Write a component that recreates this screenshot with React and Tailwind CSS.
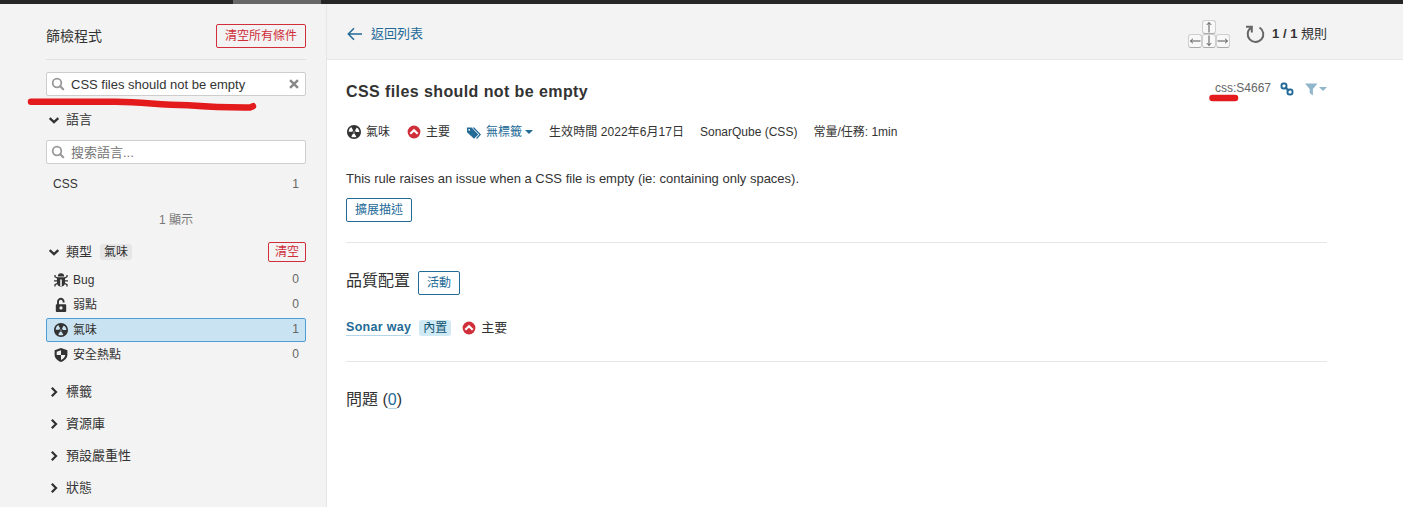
import React from "react";

const Svg = ({ className = "", children, size = 16 }) => (
  <svg viewBox="0 0 16 16" width={size} height={size} fill="currentColor" className={`block shrink-0 ${className}`}>
    {children}
  </svg>
);

const BugIcon = () => (
  <Svg>
    <path d="M4.800 4.600a3.200 3.400 0 0 1 6.400 0z" />
    <path fillRule="evenodd" d="M4 5.300h8v5.500a4 3.700 0 0 1-8 0zM7.200 7.500V14h1.600V7.500z" />
    <path d="M2 3v1.700l2.500 1.600M14 3v1.700l-2.500 1.600M1 8.800h3M12 8.800h3M2 14.500v-1.800l2.600-1.400M14 14.500v-1.800l-2.600-1.400" fill="none" stroke="currentColor" strokeWidth="1.300" />
  </Svg>
);
const LockIcon = () => (
  <Svg>
    <path d="M5 8V4.800a2.800 2.800 0 0 1 5.600-.4v1" fill="none" stroke="currentColor" strokeWidth="1.900" />
    <path fillRule="evenodd" d="M3.800 7.300h8.400a1 1 0 0 1 1 1V14a1 1 0 0 1-1 1H3.800a1 1 0 0 1-1-1V8.300a1 1 0 0 1 1-1zM8 9.300a1.600 1.600 0 1 0 0 3.200 1.600 1.600 0 0 0 0-3.200z" />
  </Svg>
);
const SmellIcon = () => (
  <Svg>
    <path d="M8 2C4.700 2 2 4.700 2 8s2.700 6 6 6 6-2.700 6-6-2.700-6-6-6zm-.5 5.500h.9v.9h-.9v-.9zm-3.800.2c-.1 0-.2-.1-.2-.2 0-.4.1-1.200.6-2S5.300 4.200 5.600 4c.2 0 .3 0 .3.1l1.300 2.300c0 .1 0 .2-.1.2-.1.2-.2.3-.3.5-.1.2-.2.4-.2.5 0 .1-.1.2-.2.2l-2.700-.1zM9.900 12c-.3.2-1.100.5-2 .5-.9 0-1.700-.3-2-.5-.1 0-.1-.2-.1-.3l1.300-2.300c0-.1.1-.1.2-.1.2.1.3.1.5.1s.4 0 .5-.1c.1 0 .2 0 .2.1l1.300 2.300c.2.2.2.3.1.3zm2.500-4.100L9.700 8c-.1 0-.2-.1-.2-.2 0-.2-.1-.4-.2-.5 0-.1-.2-.3-.3-.4-.1 0-.1-.1-.1-.2l1.300-2.300c.1-.1.2-.1.3-.1.3.2 1 .7 1.500 1.500s.6 1.600.6 2c0 0-.1.1-.2.1z" transform="translate(-1.300 -1.300) scale(1.163)" />
  </Svg>
);
const ShieldIcon = () => (
  <Svg>
    <path fillRule="evenodd" d="M8 1 1.600 3.200v4.300c0 3.400 2.500 6 6.400 7.500 3.900-1.500 6.400-4.100 6.400-7.500V3.200L8 1zM8 3.300V8h4.300c-.3 2.300-1.900 3.900-4.300 5V8H3.700V4.700L8 3.300z" />
  </Svg>
);
const MajorIcon = () => (
  <Svg>
    <circle cx="8" cy="8" r="6.400" fill="#d02f3a" />
    <path d="M4.300 9.700 8 6.200l3.700 3.500" fill="none" stroke="#fff" strokeWidth="2.200" />
  </Svg>
);
const SearchIcon = () => (
  <Svg className="text-[#999]">
    <circle cx="7" cy="7" r="4.300" fill="none" stroke="currentColor" strokeWidth="1.800" />
    <path d="m10.300 10.300 2.900 2.900" stroke="currentColor" strokeWidth="2.200" strokeLinecap="round" />
  </Svg>
);
const ChevronDown = () => (
  <Svg>
    <path d="M3.700 6.200 8 10.200l4.300-4" fill="none" stroke="currentColor" strokeWidth="2.300" />
  </Svg>
);
const ChevronRight = () => (
  <Svg>
    <path d="M5.800 3.700 10 8l-4.200 4.300" fill="none" stroke="currentColor" strokeWidth="2.300" />
  </Svg>
);
const Caret = ({ className }) => (
  <svg viewBox="0 0 8 4" width="8" height="4" fill="currentColor" className={`block shrink-0 ${className}`}>
    <path d="M0 0h8L4 4z" />
  </svg>
);

const Key = ({ children }) => (
  <span className="flex h-[14px] w-[14px] items-center justify-center rounded-[3px] border border-[#cfcfcf] border-b-[#aaa] bg-[#f8f8f8] text-[#555]">
    {children}
  </span>
);
const Arrow = ({ rotate }) => (
  <svg viewBox="0 0 12 12" width="12" height="12" className="block shrink-0" fill="none" stroke="currentColor" strokeWidth="1">
    <g transform={`rotate(${rotate} 6 6)`}>
      <path d="M6 11.500V1.500M3.800 3.900 6 1.500l2.200 2.400" />
    </g>
  </svg>
);

const TypeRow = ({ icon, label, count, active }) => (
  <div
    className={`flex h-6 items-center rounded-[2px] border pr-[6px] pl-[6px] ${
      active ? "border-[#4b9fd5] bg-[#cae3f2]" : "border-transparent"
    }`}
  >
    {icon}
    <span className="ml-1 text-[12px]">{label}</span>
    <span className="mb-[2px] ml-auto text-[12px] text-[#656565]">{count}</span>
  </div>
);

const Collapsed = ({ label }) => (
  <div className="flex h-8 items-center">
    <ChevronRight />
    <span className="ml-1">{label}</span>
  </div>
);

export default function App() {
  return (
    <div className="flex h-[507px] flex-col overflow-hidden bg-white font-['Liberation_Sans','Noto_Sans_CJK_TC',sans-serif] text-[13px] leading-4 text-[#333]">
      <div className="flex h-1 shrink-0 bg-[#262626]">
        <div className="ml-[233px] h-1 w-[88px] bg-[#676767]" />
      </div>
      <div className="flex min-h-0 flex-1">
        <aside className="relative w-[327px] shrink-0 border-r border-[#e6e6e6] bg-[#f3f3f3] pr-5 pl-[46px]">
          <div className="flex h-[56px] items-center justify-between border-b border-[#e1e1e1] pt-2">
            <span className="text-[14px]">篩檢程式</span>
            <span className="flex h-6 items-center rounded-[2px] border border-[#d02f3a] px-2 text-[12px] text-[#d02f3a]">
              清空所有條件
            </span>
          </div>
          <div className="mt-3 flex h-6 items-center rounded-[2px] border border-[#cdcdcd] bg-white pr-1 pl-[3px]">
            <SearchIcon />
            <span className="mt-px ml-[5px]">CSS files should not be empty</span>
            <Svg className="ml-auto text-[#888]" size={14}>
              <path d="m3.500 3.500 9 9m0-9-9 9" stroke="currentColor" strokeWidth="2.700" />
            </Svg>
          </div>
          <svg viewBox="0 0 240 16" width="240" height="16" className="absolute top-[92px] left-[24px]" fill="none" stroke="#e31b1c" strokeWidth="6.500" strokeLinecap="round" strokeLinejoin="round">
            <path d="M7 5.800h85c28 .4 40 2.600 72 3.400 20 1.500 50 2.300 62 2.200l3-1.200" />
          </svg>
          <div className="mt-4 flex h-4 items-center">
            <ChevronDown />
            <span className="ml-1">語言</span>
          </div>
          <div className="mt-3 flex h-6 items-center rounded-[2px] border border-[#cdcdcd] bg-white pl-[3px]">
            <SearchIcon />
            <span className="mt-px ml-[5px] text-[#737373]">搜索語言...</span>
          </div>
          <div className="mt-2 flex h-6 items-center justify-between px-[7px]">
            <span className="text-[12px]">CSS</span>
            <span className="text-[12px] text-[#656565]">1</span>
          </div>
          <div className="mt-3 flex h-6 items-center justify-center text-[12px] text-[#777]">1 顯示</div>
          <div className="mt-[10px] flex h-5 items-center">
            <ChevronDown />
            <span className="ml-1">類型</span>
            <span className="ml-2 flex h-4 items-center rounded-[3px] bg-[#e6e6e6] px-1 text-[12px]">氣味</span>
            <span className="ml-auto flex h-5 items-center rounded-[2px] border border-[#d02f3a] px-[6px] text-[12px] text-[#d02f3a]">
              清空
            </span>
          </div>
          <div className="mt-[6px] flex flex-col gap-px">
            <TypeRow icon={<BugIcon />} label="Bug" count="0" />
            <TypeRow icon={<LockIcon />} label="弱點" count="0" />
            <TypeRow icon={<SmellIcon />} label="氣味" count="1" active />
            <TypeRow icon={<ShieldIcon />} label="安全熱點" count="0" />
          </div>
          <div className="mt-[9px]">
            <Collapsed label="標籤" />
            <Collapsed label="資源庫" />
            <Collapsed label="預設嚴重性" />
            <Collapsed label="狀態" />
          </div>
        </aside>

        <main className="min-w-0 flex-1">
          <header className="flex h-[56px] items-center border-b border-[#e6e6e6] bg-[#f3f3f3] pr-[76px] pl-5 pt-1">
            <svg viewBox="0 0 16 16" width="16" height="16" className="block text-[#236a97]" fill="none" stroke="currentColor" strokeWidth="1.500">
              <path d="M15 8H1.500M7 2.300 1.300 8 7 13.700" />
            </svg>
            <span className="ml-2 text-[#236a97]">返回列表</span>
            <div className="ml-auto flex flex-col items-center">
              <Key><Arrow rotate={0} /></Key>
              <div className="flex">
                <Key><Arrow rotate={270} /></Key>
                <Key><Arrow rotate={180} /></Key>
                <Key><Arrow rotate={90} /></Key>
              </div>
            </div>
            <svg viewBox="0 0 20 20" width="20" height="20" className="ml-[15px] block text-[#666]" fill="none" stroke="currentColor" strokeWidth="2">
              <path d="M14.500 3.500a7.800 7.800 0 1 1-8.300.2" />
              <path d="M1 2.700h5.800v5.700" />
            </svg>
            <span className="ml-[7px]"><b>1 / 1</b> 規則</span>
          </header>

          <div className="pr-[76px] pl-[19px]">
            <div className="flex h-[62px] items-center justify-between">
              <h1 className="mt-[2px] text-[16px] font-bold tracking-[0.41px]">CSS files should not be empty</h1>
              <div className="relative flex items-center text-[12px] text-[#656565]">
                <span className="mb-[6px]">css:S4667</span>
                <svg viewBox="0 0 32 8" width="32" height="8" className="absolute top-[14px] left-[-8px]" fill="none" stroke="#e31b1c" strokeWidth="6.500" strokeLinecap="round">
                  <path d="M5.500 4h22.500" />
                </svg>
                <svg viewBox="0 0 16 16" width="16" height="16" className="mb-1 ml-2 block text-[#236a97]" fill="none" stroke="currentColor" strokeWidth="1.900">
                  <rect x="2.500" y="2.500" width="5" height="5" rx="2" />
                  <rect x="8.500" y="8.500" width="5" height="5" rx="2" />
                  <path d="m6 6 4 4" />
                </svg>
                <Svg className="mb-1 ml-2 text-[#91b5cb]">
                  <path d="M2 2.500h12.500L9.900 8v6.500L6.700 12V8z" />
                </Svg>
                <Caret className="mb-1 text-[#91b5cb]" />
              </div>
            </div>

            <div className="flex h-5 items-center text-[12px]">
              <SmellIcon />
              <span className="ml-1">氣味</span>
              <span className="ml-4"><MajorIcon /></span>
              <span className="ml-1">主要</span>
              <span className="ml-4 flex items-center text-[#236a97]">
                <Svg className="mt-[2px]">
                  <path d="M6.500 2.500h1.800L15 9.400 11 14l-.9-.9L13.300 9.500z" />
                  <path fillRule="evenodd" d="M1 2.500h4.600l6.700 6.900-4.300 4.400L1 7.300zM3.200 3.900a.9.900 0 1 0 0 1.800.9.900 0 0 0 0-1.800z" />
                </Svg>
                <span className="ml-1">無標籤</span>
                <Caret className="ml-[3px]" />
              </span>
              <span className="ml-4 tracking-[0.06px]">生效時間 2022年6月17日</span>
              <span className="ml-4">SonarQube (CSS)</span>
              <span className="ml-4">常量/任務: 1min</span>
            </div>

            <p className="mt-[29px] h-4 whitespace-nowrap">This rule raises an issue when a CSS file is empty (ie: containing only spaces).</p>
            <div className="mt-[11px] flex">
              <span className="flex h-6 items-center rounded-[2px] border border-[#236a97] px-2 text-[12px] text-[#236a97]">擴展描述</span>
            </div>
            <hr className="mt-5 border-t border-[#e6e6e6]" />

            <div className="mt-7 flex h-6 items-center">
              <h2 className="mb-1 text-[16px]">品質配置</h2>
              <span className="ml-2 flex h-6 items-center rounded-[2px] border border-[#236a97] px-2 text-[12px] text-[#236a97]">活動</span>
            </div>
            <div className="mt-[23px] flex h-5 items-center">
              <span className="border-b border-[#b5d5e8] text-[12.500px] leading-[15px] font-bold tracking-[0.31px] text-[#236a97]">Sonar way</span>
              <span className="ml-2 flex h-4 items-center rounded-[3px] bg-[#cfe9f5] px-1 text-[12px] text-[#0e516f]">內置</span>
              <span className="ml-[10px]"><MajorIcon /></span>
              <span className="ml-1">主要</span>
            </div>
            <hr className="mt-[23px] border-t border-[#e6e6e6]" />
            <h2 className="mt-7 text-[16px] leading-5">
              問題 (<span className="border-b border-[#b5d5e8] text-[#236a97]">0</span>)
            </h2>
          </div>
        </main>
      </div>
    </div>
  );
}
